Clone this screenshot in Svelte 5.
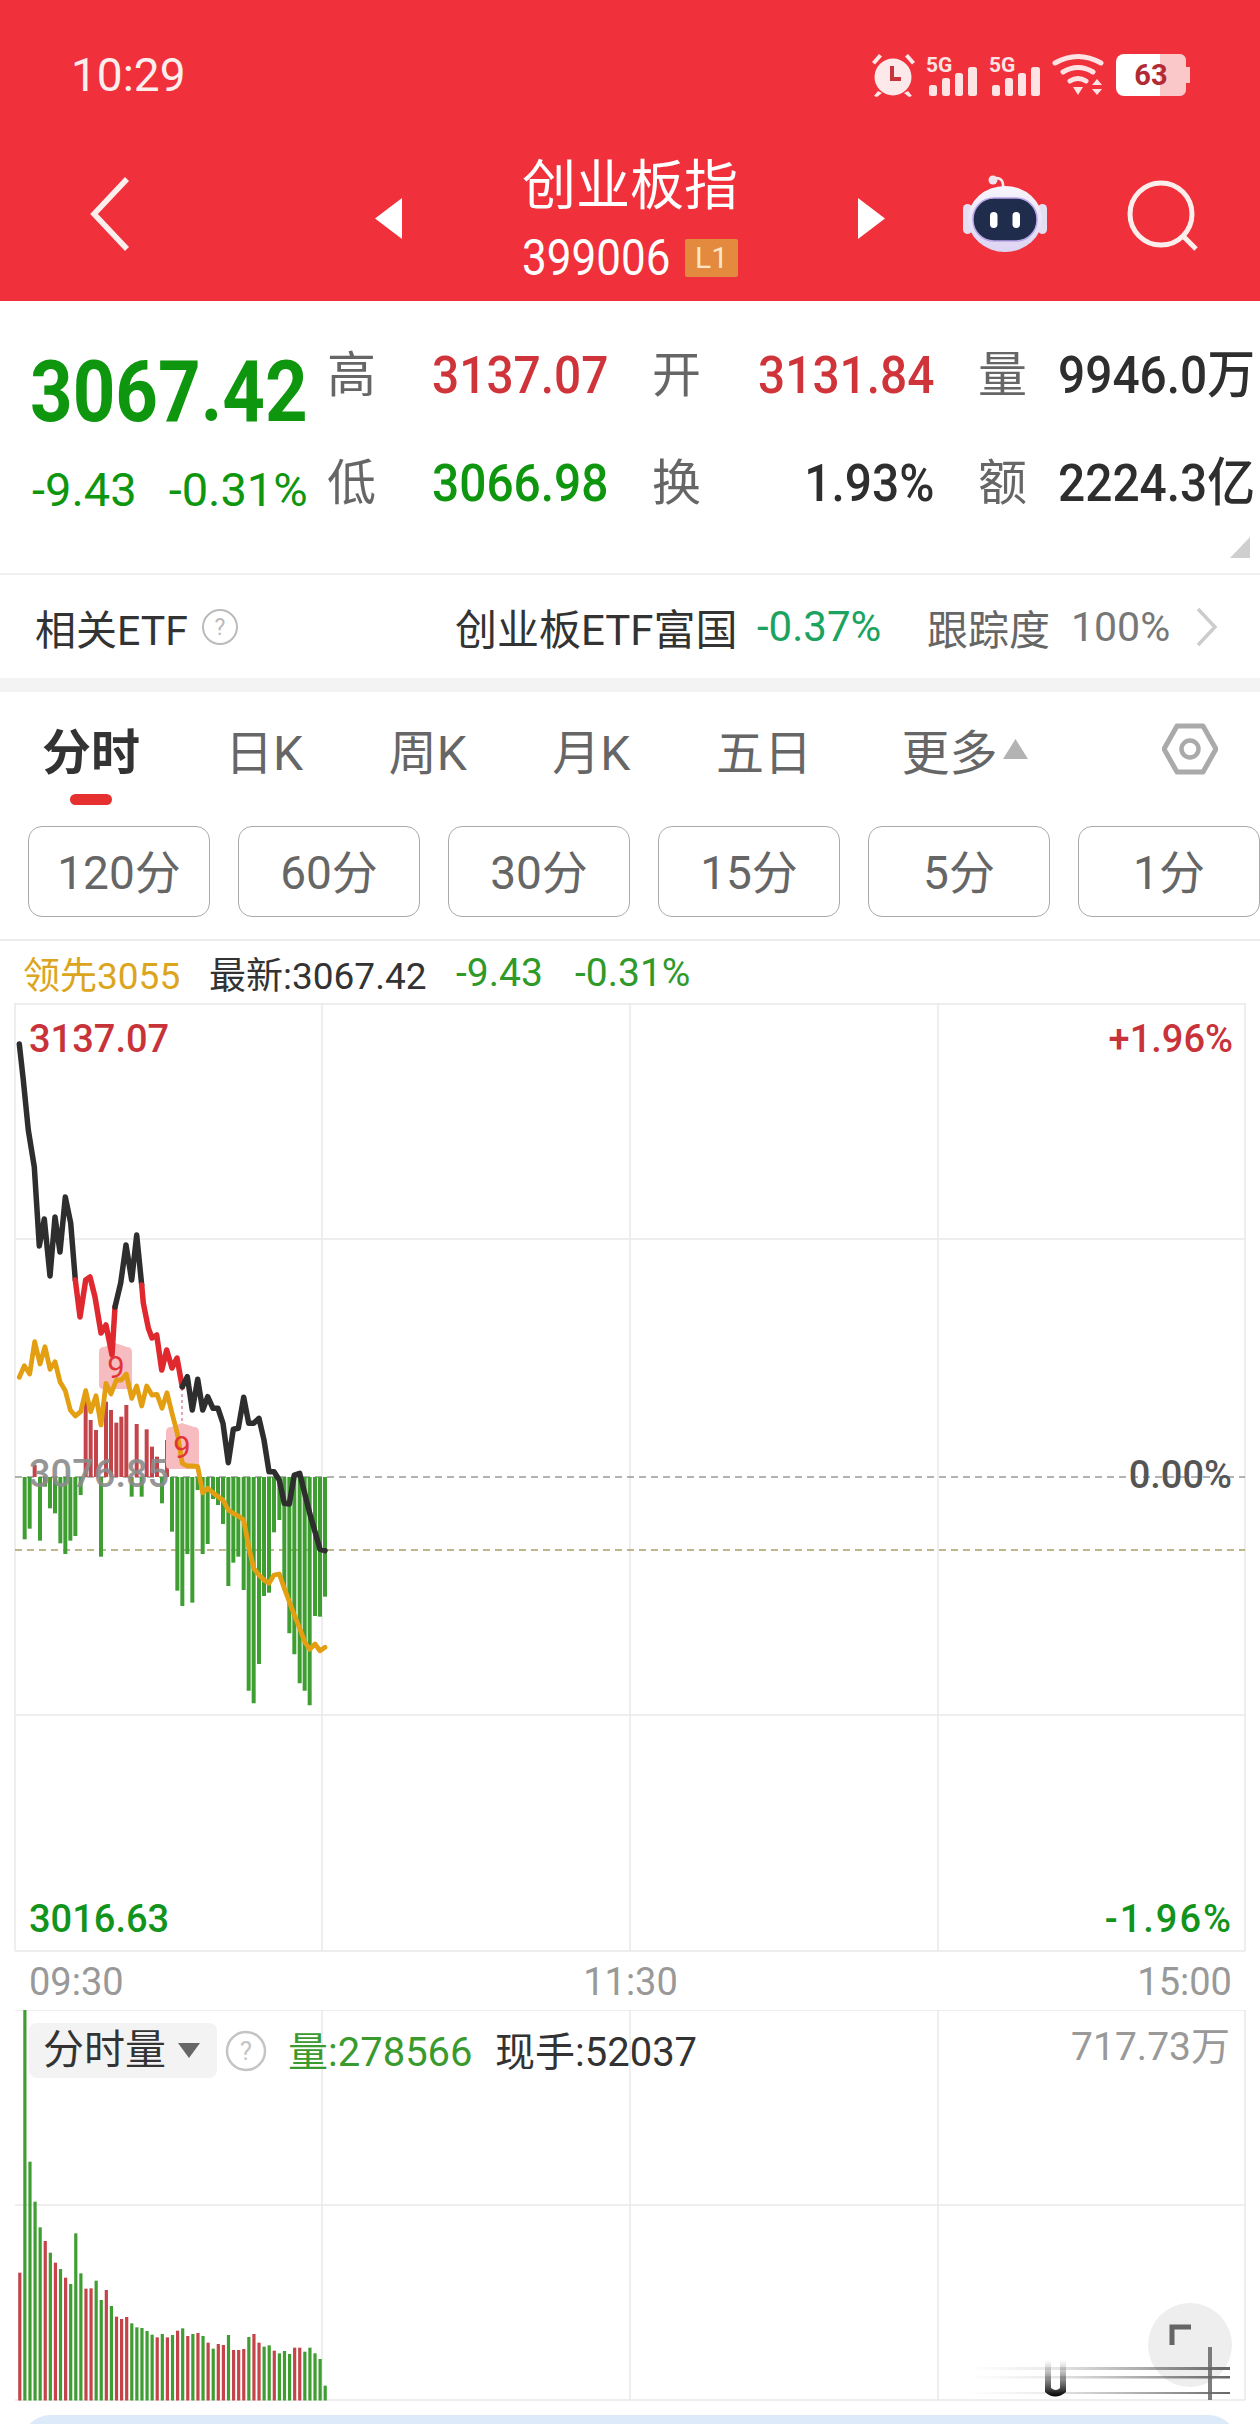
<script>
  const GREEN = '#3f9e32', RED = '#c4444a';
  const pts = (arr) => arr.map((p) => `${(p[0] / 3).toFixed(1)},${p[1].toFixed(1)}`).join(' ');
  const z = (arr) => arr.map((p) => [p[0], 1300 + p[1] / 3]);

  const black1 = [[58,1044],[70,1080],[85,1130],[103,1167],[118,1246],[133,1219],[150,1276],[165,1217],[180,1252],[196,1197],[212,1223],[226,1280]];
  const red1 = [[226,1280],[240,1317],[257,1280],[270,1277],[285,1297],[303,1333],[318,1325],[336,1355],[345,1307]];
  const black2 = [[345,1307],[362,1283],[378,1245],[395,1280],[410,1235],[425,1285]];
  const red2 = [[425,1285],[430,1303],[445,1328],[456,1338],[470,1335],[485,1370],[500,1350],[516,1368],[531,1358],[547,1387]];
  const black3 = z([[547,260],[562,230],[577,330],[593,238],[608,330],[623,290],[639,325],[654,325],[669,370],[685,488],[700,388],[715,385],[731,292],[746,370],[761,370],[777,355],[792,420],[807,515],[822,515],[838,540],[853,610],[868,612],[883,525],[899,520],[914,580],[929,640],[945,695],[960,748],[975,752]]);
  const gold = z([[58,232],[73,197],[89,222],[104,125],[120,192],[135,140],[150,208],[165,185],[180,245],[196,272],[211,330],[226,348],[242,335],[257,272],[272,335],[288,287],[303,375],[318,250],[333,282],[349,240],[364,240],[379,222],[395,295],[410,258],[425,318],[440,258],[456,285],[471,283],[486,325],[501,278],[516,340],[532,400],[547,490],[562,498],[577,498],[593,500],[608,578],[623,565],[639,578],[654,590],[669,600],[685,630],[700,640],[715,648],[731,660],[746,740],[761,805],[777,825],[792,840],[807,850],[822,825],[838,822],[853,865],[868,905],[883,945],[899,985],[914,1025],[929,1048],[945,1032],[960,1052],[975,1042]]);

  const flow = [[74,'G',718],[89,'G',686],[104,'R',495],[120,'G',722],[135,'G',560],[150,'G',625],[165,'G',640],[181,'G',730],[196,'G',762],[211,'G',722],[226,'G',708],[242,'G',585],[257,'R',305],[272,'R',360],[288,'R',390],[303,'G',770],[318,'R',305],[333,'R',330],[349,'R',368],[364,'R',350],[379,'R',315],[395,'G',590],[410,'R',372],[425,'G',590],[440,'R',388],[456,'R',440],[471,'R',470],[486,'G',610],[501,'R',420],[516,'G',695],[532,'G',872],[547,'G',918],[562,'G',762],[577,'G',908],[593,'G',570],[608,'G',762],[623,'G',732],[639,'G',597],[654,'G',615],[669,'G',672],[685,'G',858],[700,'G',788],[715,'G',770],[731,'G',870],[746,'G',1172],[761,'G',1210],[777,'G',1092],[792,'G',888],[807,'G',878],[822,'G',697],[838,'G',660],[853,'G',870],[868,'G',1000],[883,'G',1063],[899,'G',1150],[914,'G',1172],[929,'G',1216],[945,'G',948],[960,'G',950],[975,'G',890]];
  const flowBars = flow.map(([x, c, v]) => ({ x: x / 3, y2: 1300 + v / 3, color: c === 'G' ? GREEN : RED }));

  const volRaw = [['R',938],['G',148],['G',605],['G',725],['G',802],['R',843],['G',878],['R',908],['G',927],['R',953],['G',972],['G',820],['G',940],['R',986],['R',985],['G',962],['G',1020],['R',990],['G',1038],['R',1070],['R',1077],['R',1071],['G',1090],['G',1102],['G',1104],['G',1113],['G',1124],['R',1132],['G',1122],['R',1132],['G',1125],['R',1112],['G',1105],['R',1128],['G',1122],['R',1119],['G',1128],['R',1148],['G',1166],['R',1152],['R',1155],['G',1125],['R',1170],['R',1170],['R',1167],['G',1131],['R',1122],['R',1148],['G',1160],['G',1156],['R',1172],['G',1180],['G',1173],['G',1182],['R',1163],['R',1163],['G',1175],['G',1163],['G',1180],['G',1197],['G',1277]];
  const volBars = volRaw.map(([c, v], i) => ({ x: 19.7 + i * 5.09, y: 1960 + v / 3, color: c === 'G' ? GREEN : RED }));

  const tabs = ['日K', '周K', '月K', '五日'];
  const periods = ['120分', '60分', '30分', '15分', '5分', '1分'];
  const signalX = [0, 63];
  const verticals = [15, 322, 630, 938, 1245];
</script>

<div class="page">
  <header class="head">
    <div class="status">
      <span class="time">10:29</span>
      <svg class="status-icons" viewBox="870 50 322 50" width="322" height="50" aria-hidden="true">
        <g fill="#fde9e9">
          <circle cx="893" cy="77" r="18.5" />
          <path d="M872 62l7-8 3 2.500-7 8zM915 62l-7-8-3 2.500 7 8z" />
          <path d="M878 91l-4 5 3 1 5-4zM908 91l4 5-3 1-5-4z" />
        </g>
        <path d="M892 66v13h9" fill="none" stroke="#c8343c" stroke-width="4" />
        {#each signalX as dx}
          <g transform="translate({dx} 0)" fill="#fde3e4">
            <text class="five" x="926" y="72">5G</text>
            <rect x="929" y="85" width="8" height="11" rx="2.500" />
            <rect x="942" y="78" width="8" height="18" rx="2.500" />
            <rect x="955" y="73" width="8" height="23" rx="2.500" />
            <rect x="968" y="67" width="9" height="29" rx="2.500" />
          </g>
        {/each}
        <g fill="none" stroke="#fde3e4" stroke-width="5" stroke-linecap="round">
          <path d="M1055 63q23-13 46 0" />
          <path d="M1063 72q15-9 30 0" />
          <path d="M1070 81q8-5 16 0" />
        </g>
        <path d="M1073 87h10l-5 8zM1097 79l5 6h-10zM1097 95l5-6h-10z" fill="#fde3e4" />
        <path d="M1124 54h36v42h-36a8 8 0 0 1-8-8v-26a8 8 0 0 1 8-8z" fill="#fff" />
        <path d="M1160 54h20a6 6 0 0 1 6 6v7h4v16h-4v7a6 6 0 0 1-6 6h-20z" fill="#fbc8ca" />
        <text class="batt" x="1151" y="85" text-anchor="middle">63</text>
      </svg>
    </div>
    <div class="nav">
      <svg class="back" viewBox="0 0 44 76" width="44" height="76" aria-hidden="true">
        <path d="M39 3 6 38l33 35" fill="none" stroke="#fdeeee" stroke-width="5.500" />
      </svg>
      <svg class="prev" viewBox="0 0 27 41" width="27" height="41" aria-hidden="true"><path d="M27 0v41L0 20.500z" fill="#fff" /></svg>
      <div class="title">
        <div class="name">创业板指</div>
        <div class="code-row"><span class="code">399006</span><span class="lvl">L1</span></div>
      </div>
      <svg class="next" viewBox="0 0 27 41" width="27" height="41" aria-hidden="true"><path d="M0 0v41l27-20.500z" fill="#fff" /></svg>
      <svg class="robot" viewBox="960 172 90 84" width="90" height="84" aria-hidden="true">
        <defs>
          <linearGradient id="shell" x1="0" x2="0" y1="0" y2="1">
            <stop offset="0" stop-color="#f8f5fc" />
            <stop offset="1" stop-color="#dcd4f2" />
          </linearGradient>
        </defs>
        <circle cx="993" cy="180" r="4.500" fill="#efe3ec" />
        <path d="M996 178q8 0 7 10" fill="none" stroke="#f5ecef" stroke-width="2.500" />
        <rect x="963" y="204" width="9" height="30" rx="4.500" fill="#e4def2" />
        <rect x="1038" y="204" width="9" height="30" rx="4.500" fill="#e4def2" />
        <ellipse cx="1005" cy="219" rx="37" ry="33" fill="url(#shell)" />
        <rect x="973" y="198" width="64" height="43" rx="21" fill="#1f2c4c" stroke="#b9a5e8" stroke-width="1.500" />
        <rect x="990" y="212" width="7.500" height="16" rx="3.700" fill="#fff" />
        <rect x="1012.500" y="212" width="7.500" height="16" rx="3.700" fill="#fff" />
      </svg>
      <svg class="search" viewBox="1124 180 76 74" width="76" height="74" aria-hidden="true">
        <circle cx="1160" cy="215" r="31" fill="none" stroke="#fdeeee" stroke-width="5" />
        <path d="M1183 238l12 12" stroke="#fdeeee" stroke-width="5" />
      </svg>
    </div>
  </header>

  <section class="quote">
    <div class="q-price"><span class="squeeze big">3067.42</span></div>
    <span class="lab">高</span>
    <span class="val red"><span class="squeeze">3137.07</span></span>
    <span class="lab">开</span>
    <span class="val red"><span class="squeeze">3131.84</span></span>
    <span class="lab">量</span>
    <span class="val dark"><span class="squeeze">9946.0万</span></span>
    <div class="q-change"><span>-9.43</span><span>-0.31%</span></div>
    <span class="lab">低</span>
    <span class="val green"><span class="squeeze">3066.98</span></span>
    <span class="lab">换</span>
    <span class="val dark end"><span class="squeeze sq-end">1.93%</span></span>
    <span class="lab">额</span>
    <span class="val dark"><span class="squeeze">2224.3亿</span></span>
    <svg class="corner" viewBox="0 0 20 21" width="20" height="21" aria-hidden="true"><path d="M20 0v21H0z" fill="#cfcfcf" /></svg>
  </section>

  <section class="etf">
    <span class="etf-title">相关ETF</span>
    <svg class="help" viewBox="0 0 38 38" width="38" height="38" aria-hidden="true">
      <circle cx="19" cy="19" r="17" fill="none" stroke="#bbb" stroke-width="2" />
      <text x="19" y="27" text-anchor="middle" class="qm">?</text>
    </svg>
    <span class="etf-name">创业板ETF富国</span>
    <span class="etf-chg">-0.37%</span>
    <span class="etf-track">跟踪度</span>
    <span class="etf-pct">100%</span>
    <svg class="etf-go" viewBox="0 0 24 40" width="24" height="40" aria-hidden="true"><path d="M3 2l17 18L3 38" fill="none" stroke="#ccc" stroke-width="3.500" /></svg>
  </section>
  <div class="band"></div>

  <nav class="tabs">
    <span class="tab active">分时</span>
    {#each tabs as t}<span class="tab">{t}</span>{/each}
    <span class="tab more">更多<svg viewBox="0 0 25 20" width="25" height="20" aria-hidden="true"><path d="M12.500 0 25 20H0z" fill="#b3b3b3" /></svg></span>
    <svg class="hex" viewBox="0 0 56 52" width="56" height="52" aria-hidden="true">
      <path d="M15 3h26l13 23-13 23H15L2 26z" fill="none" stroke="#aaa" stroke-width="5" stroke-linejoin="round" />
      <circle cx="28" cy="26" r="8.500" fill="none" stroke="#aaa" stroke-width="4.500" />
    </svg>
  </nav>

  <div class="periods">
    {#each periods as p}<span class="period">{p}</span>{/each}
  </div>

  <div class="legend">
    <span class="gold">领先3055</span>
    <span class="latest">最新:3067.42</span>
    <span class="lg-green">-9.43</span>
    <span class="lg-green">-0.31%</span>
  </div>

  <svg class="main-chart" viewBox="0 1003 1260 950" width="1260" height="950" role="img" aria-label="分时走势图">
    {#each verticals as x}<line x1={x} x2={x} y1="1003" y2="1951" class="grid" />{/each}
    <line x1="15" x2="1245" y1="1004" y2="1004" class="grid" />
    <line x1="15" x2="1245" y1="1239" y2="1239" class="grid" />
    <line x1="15" x2="1245" y1="1715" y2="1715" class="grid" />
    <line x1="15" x2="1245" y1="1951" y2="1951" class="grid" />
    <line x1="15" x2="1245" y1="1477" y2="1477" stroke="#999" stroke-width="1.500" stroke-dasharray="7 5" />
    <line x1="15" x2="1245" y1="1550" y2="1550" stroke="#ad9d6a" stroke-width="1.500" stroke-dasharray="7 5" />

    <text class="c-label" x="29" y="1052" fill="#c8333a">3137.07</text>
    <text class="c-label" x="1233" y="1052" text-anchor="end" fill="#c8333a">+1.96%</text>
    <text class="c-label" x="1232" y="1488" text-anchor="end" fill="#555">0.00%</text>
    <text class="c-label" x="29" y="1932" fill="#12941c">3016.63</text>
    <text class="c-label wide" x="1233" y="1932" text-anchor="end" fill="#12941c">-1.96%</text>

    {#each flowBars as b}<line x1={b.x} x2={b.x} y1="1477" y2={b.y2} stroke={b.color} stroke-width="4" />{/each}
    <text class="c-label" x="29" y="1487" fill="#8b8b8b" opacity="0.9">3076.85</text>

    <path d="M99 1352q0-5 5-5l11-4 12 4q5 0 5 5v33q0 4-4 4h-25q-4 0-4-4z" fill="#f6bcbf" />
    <path d="M166 1432q0-5 5-5l11-4 12 4q5 0 5 5v33q0 4-4 4h-25q-4 0-4-4z" fill="#f6bcbf" />
    <line x1="182" x2="182" y1="1388" y2="1422" stroke="#dca6b5" stroke-width="2" stroke-dasharray="3 3" />

    <polyline points={pts(black1)} class="line" stroke="#2e2e2e" />
    <polyline points={pts(red1)} class="line" stroke="#e0292f" />
    <polyline points={pts(black2)} class="line" stroke="#2e2e2e" />
    <polyline points={pts(red2)} class="line" stroke="#e0292f" />
    <polyline points={pts(black3)} class="line" stroke="#2e2e2e" />
    <polyline points={pts(gold)} class="line gold-line" stroke="#e39e12" />

    <text class="nine" x="116" y="1378" text-anchor="middle">9</text>
    <text class="nine" x="182" y="1458" text-anchor="middle">9</text>
  </svg>

  <div class="axis"><span>09:30</span><span>11:30</span><span>15:00</span></div>

  <div class="vol">
    <svg class="vol-chart" viewBox="0 2010 1260 391" width="1260" height="391" aria-hidden="true">
      <defs>
        <linearGradient id="fade" x1="0" x2="1" y1="0" y2="0">
          <stop offset="0" stop-color="#555" stop-opacity="0" />
          <stop offset="0.3" stop-color="#555" stop-opacity="0.12" />
          <stop offset="1" stop-color="#333" stop-opacity="0.75" />
        </linearGradient>
        <linearGradient id="cup" x1="0" x2="0" y1="0" y2="1">
          <stop offset="0" stop-color="#555" stop-opacity="0" />
          <stop offset="1" stop-color="#000" />
        </linearGradient>
      </defs>
      {#each [322, 630, 938, 1245] as x}<line x1={x} x2={x} y1="2010" y2="2400" class="grid" />{/each}
      <line x1="15" x2="1245" y1="2010" y2="2010" class="grid" />
      <line x1="15" x2="1245" y1="2205" y2="2205" class="grid" />
      <line x1="15" x2="1245" y1="2400" y2="2400" class="grid" />
      {#each volBars as b}<rect x={b.x - 1.500} y={b.y} width="3.200" height={2400.500 - b.y} fill={b.color} />{/each}
      <circle cx="1190" cy="2345" r="42" fill="#eee" />
      <path d="M1172 2345v-18h19" fill="none" stroke="#666" stroke-width="5" />
      <rect x="970" y="2367" width="260" height="3" fill="url(#fade)" />
      <rect x="970" y="2376" width="260" height="2.500" fill="url(#fade)" />
      <rect x="970" y="2392" width="260" height="2" fill="url(#fade)" />
      <rect x="1208" y="2347" width="4" height="53" fill="#666" opacity="0.85" />
      <path d="M1045 2360h6v28q5 4 9 0v-28h6v32q-11 9-21 0z" fill="url(#cup)" />
    </svg>
    <div class="vol-legend">
      <span class="pill">分时量<svg viewBox="0 0 22 15" width="22" height="15" aria-hidden="true"><path d="M0 0h22L11 15z" fill="#666" /></svg></span>
      <svg class="vol-help" viewBox="0 0 42 42" width="42" height="42" aria-hidden="true">
        <circle cx="21" cy="21" r="19" fill="none" stroke="#c4c4c4" stroke-width="2.500" />
        <text x="21" y="30" text-anchor="middle" class="qm2">?</text>
      </svg>
      <span class="vol-amt">量:278566</span>
      <span class="vol-hand">现手:52037</span>
    </div>
    <span class="vol-max">717.73万</span>
  </div>
  <div class="panel"></div>
</div>

<style>
  :global(body) { margin: 0; background: #fff; }
  .page {
    width: 1260px; height: 2424px; overflow: hidden; background: #fff; color: #333;
    font-family: Roboto, "Noto Sans CJK SC", sans-serif;
  }
  .head { height: 301px; background: #f0303a; color: #fff; box-sizing: border-box; }
  .status { height: 150px; padding: 0 68px 0 71px; display: flex; align-items: center; justify-content: space-between; }
  .time { font-size: 46px; color: #fdeeee; letter-spacing: 0; }
  .status-icons { display: block; }
  .five { font-size: 21px; font-weight: 700; fill: #fde3e4; }
  .batt { font-size: 29px; font-weight: 700; fill: #b22a33; }
  .nav { height: 132px; padding-top: 2px; display: flex; align-items: center; }
  .back { margin-left: 88px; margin-top: -8px; }
  .prev { margin-left: 243px; }
  .title { margin-left: 120px; margin-top: -5px; width: 216px; text-align: left; }
  .name { font-size: 54px; line-height: 68px; color: #fff; white-space: nowrap; }
  .code-row { display: flex; align-items: center; gap: 15px; margin-top: 17px; height: 40px; }
  .code { font-size: 50px; width: 148px; display: inline-block; transform: scaleX(.88); transform-origin: left; white-space: nowrap; }
  .lvl { width: 53px; height: 38px; background: #e38a3e; color: #fde6c8; font-size: 30px; line-height: 38px; text-align: center; border-radius: 2px; }
  .next { margin-left: 120px; }
  .robot { margin-left: 75px; margin-top: -8px; }
  .search { margin-left: 75px; margin-top: -4px; }

  .quote {
    position: relative; height: 272px; box-sizing: border-box; padding: 21px 0 0 30px;
    display: grid; grid-template-columns: 298px 104px 221px 105px 221px 79px 202px; grid-template-rows: 108px 108px;
    align-items: center; white-space: nowrap;
  }
  .squeeze { display: inline-block; transform: scaleX(.92); transform-origin: left center; }
  .sq-end { transform-origin: right center; }
  .q-price { align-self: end; font-size: 85px; line-height: 76px; font-weight: 700; color: #0e960e; }
  .q-price .big { transform: scaleX(.875); }
  .q-change { font-size: 47px; color: #0e960e; display: flex; gap: 32px; padding: 12px 0 0 2px; line-height: 50px; }
  .lab { font-size: 49px; color: #666; line-height: 60px; margin-left: -1px; }
  .val { font-size: 52px; line-height: 60px; font-weight: 500; }
  .red { color: #cf343a; }
  .green { color: #0e960e; }
  .dark { color: #2e2e2e; }
  .end { text-align: right; padding-right: 45px; }
  .corner { position: absolute; left: 1230px; top: 236px; }

  .etf { height: 105px; border-top: 2px solid #efefef; box-sizing: border-box; padding-left: 35px; display: flex; align-items: center; white-space: nowrap; }
  .etf-title { font-size: 41px; width: 166px; color: #333; }
  .help { display: block; margin-right: 216px; }
  .qm { font-size: 23px; fill: #bbb; }
  .etf-name { font-size: 42px; width: 302px; color: #333; }
  .etf-chg { font-size: 42px; width: 170px; color: #1ba35f; }
  .etf-track { font-size: 41px; width: 144px; color: #666; }
  .etf-pct { font-size: 41px; width: 124px; color: #777; }
  .band { height: 14px; background: #f3f3f3; }

  .tabs { height: 134px; box-sizing: border-box; padding: 33px 42px 0 42px; display: flex; align-items: flex-start; gap: 85.500px; white-space: nowrap; }
  .tab { font-size: 48px; line-height: 58px; color: #666; position: relative; display: inline-flex; align-items: center; }
  .tab.active { font-size: 49px; font-weight: 700; color: #333; margin-right: -0.500px; }
  .tab.active::after { content: ""; position: absolute; left: 28px; top: 69px; width: 42px; height: 11px; border-radius: 6px; background: #e5302f; }
  .more { margin-left: 4px; }
  .more svg { margin-left: 6px; margin-bottom: 11px; }
  .hex { margin-left: auto; margin-top: -2px; }

  .periods { display: flex; gap: 28px; padding-left: 28px; overflow: hidden; }
  .period { flex: 0 0 182px; height: 91px; box-sizing: border-box; border: 1.500px solid #aaa; border-radius: 14px; font-size: 46px; line-height: 92px; text-align: center; color: #666; }

  .legend { height: 64px; margin-top: 22px; border-top: 2px solid #ececec; box-sizing: border-box; display: flex; align-items: center; padding: 2px 0 0 23px; font-size: 37px; white-space: nowrap; }
  .gold { color: #dba520; width: 186px; }
  .latest { color: #333; width: 247px; }
  .lg-green { color: #2f9a2a; width: 119px; font-size: 39px; }

  .main-chart { display: block; }
  .grid { stroke: #e9e9e9; stroke-width: 1.500; }
  .c-label { font-size: 38px; font-weight: 500; font-family: Roboto, sans-serif; }
  .wide { letter-spacing: 2px; }
  .line { fill: none; stroke-width: 5.500; stroke-linejoin: round; stroke-linecap: round; }
  .gold-line { stroke-width: 4.800; }
  .nine { font-size: 31px; fill: #e0343a; font-family: Roboto, sans-serif; }

  .axis { height: 57px; display: flex; justify-content: space-between; align-items: center; padding: 0 28px 0 29px; font-size: 38px; color: #999; }

  .vol { position: relative; height: 391px; }
  .vol-chart { display: block; }
  .vol-legend { position: absolute; left: 29px; top: 13px; display: flex; align-items: center; white-space: nowrap; }
  .pill { width: 188px; height: 55px; box-sizing: border-box; padding-left: 14px; background: #f3f3f3; border-radius: 8px; font-size: 41px; line-height: 55px; color: #333; display: flex; align-items: center; gap: 12px; }
  .vol-help { margin-left: 8px; }
  .qm2 { font-size: 26px; fill: #c4c4c4; }
  .vol-amt { margin: -4px 0 0 21px; width: 207px; font-size: 40px; color: #3a9a2e; }
  .vol-hand { margin-top: -4px; font-size: 40px; color: #333; }
  .vol-max { position: absolute; right: 30px; top: 5px; font-size: 39px; color: #999; }
  .panel { height: 40px; margin: 14px 22px 0 21px; background: #dceaf9; border-radius: 30px 30px 0 0; }
</style>
